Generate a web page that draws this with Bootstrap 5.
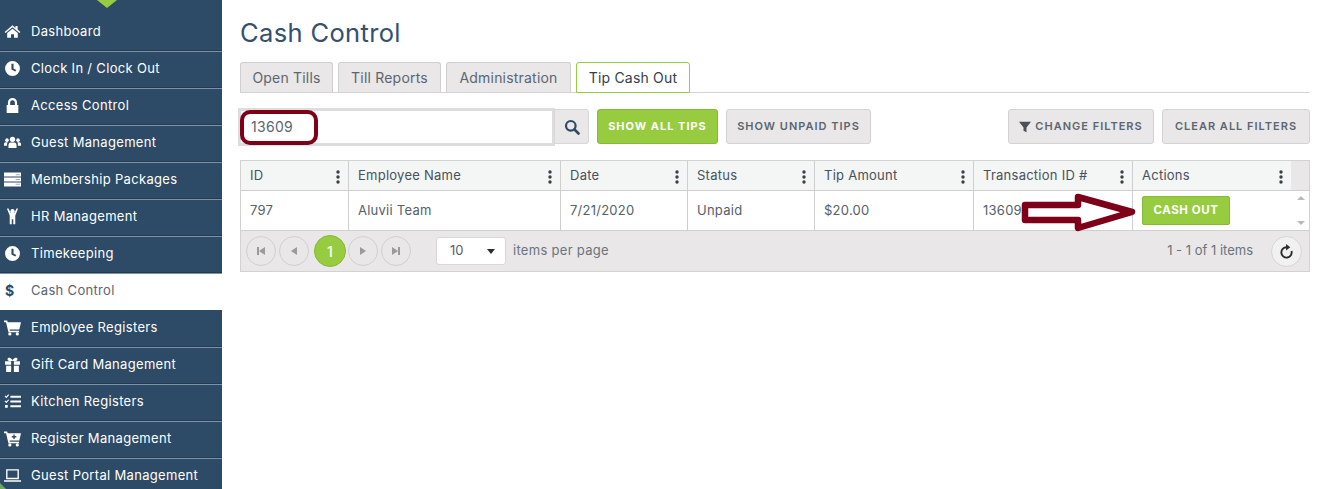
<!DOCTYPE html>
<html lang="en">
<head>
<meta charset="utf-8">
<title>Cash Control</title>
<link rel="stylesheet" href="https://cdn.jsdelivr.net/npm/bootstrap@5.3.0/dist/css/bootstrap.min.css">
<style>
html,body{height:100%;overflow:hidden;background:#fff}
body{font-family:"Inter","Liberation Sans",sans-serif;font-size:13px;color:#566068}
.app-shell{height:489px;overflow:hidden}
.side-rail{width:222px;flex:none;background:#2d4a66;padding-top:15px;position:relative;height:489px;overflow:hidden}
.rail-tip{position:absolute;left:97px;top:0;width:0;height:0;border-left:10px solid transparent;border-right:10px solid transparent;border-top:8px solid #97cc40}
.rail-corner{position:absolute;left:0;bottom:0;width:0;height:0;border-right:6px solid transparent;border-bottom:6px solid #6fa85a}
.rail-link{display:flex;align-items:center;height:37px;padding-bottom:3px;color:#fff;text-decoration:none;border-bottom:1px solid #7e92a5;box-shadow:inset 0 -1px 0 #233c54;font-size:13px;letter-spacing:.32px}
.rail-link:hover{color:#fff}
.rail-link.is-current{background:#fff;color:#5a6670;border-bottom-color:#2d4a66;box-shadow:none}
.rail-ico{width:31px;flex:none;display:flex;justify-content:flex-start;padding-left:4px}
.rail-ico svg{width:17px;height:17px;fill:currentColor}
.rail-dollar{font-weight:700;font-size:14px;color:#2d4a66;padding-left:1px}
.main-pane{width:1070px;margin-left:18px;flex:none}
.page-head{font-size:25.5px;font-weight:400;color:#34506d;margin:0;padding-top:17px;line-height:31px;height:62px;letter-spacing:.35px}
.tab-strip{display:flex;gap:5px;border-bottom:1px solid #d4d4d4;height:31px;list-style:none;padding:0;margin:0}
.tab-btn{display:flex;align-items:center;justify-content:center;height:30px;background:#e9e7e8;border:1px solid #cfcfcf;border-bottom:0;border-radius:3px 3px 0 0;color:#5b6670;font-size:14px;letter-spacing:.2px;text-decoration:none}
.tab-btn.is-on{background:#fff;border:1px solid #97cc40;color:#34404a;height:31px}
.w-t1{width:93px}.w-t2{width:103px}.w-t3{width:125px}.w-t4{width:114px}
.tool-row{display:flex;align-items:center;margin-top:16px;height:35px}
.find-box{width:313px;height:34px;border:1px solid #ddd;box-shadow:0 0 0 2px #ddd;padding:0 10px;font-size:14px;letter-spacing:.3px;color:#5b6670;background:#fff;outline:0;font-family:inherit}
.find-btn{width:35px;height:35px;margin-left:1px;background:#e9e7e8;border:1px solid #d8d8d8;border-radius:0 3px 3px 0;display:flex;align-items:center;justify-content:center;padding:0;color:#2d4a66}
.find-btn svg{width:16px;height:16px}
.act-btn{height:35px;border-radius:3px;font-size:11px;font-weight:600;letter-spacing:1px;padding:0;display:flex;align-items:center;justify-content:center;text-transform:uppercase}
.act-gray{background:#e9e7e8;border:1px solid #d2d2d2;color:#5b6670}
.act-green{background:#97cc40;border:1px solid #86b83a;color:#fff;font-weight:700}
.w-b1{width:121px;margin-left:8px}.w-b2{width:145px;margin-left:8px}.w-b3{width:146px;margin-left:auto}.w-b4{width:148px;margin-left:8px}
.act-gray svg{width:12px;height:12px;margin-right:4px;fill:#4a5159}
.data-wrap{margin-top:16px;border:1px solid #d2d2d2;width:1070px}
.grid-line{display:flex}
.head-line{background:#f4f5f5;height:30px;border-bottom:1px solid #cfcfcf}
.body-line{height:40px;background:#fff;border-bottom:1px solid #cfcfcf}
.cell-box{flex:none;display:flex;align-items:center;justify-content:space-between;padding:0 9px;border-right:1px solid #cfcfcf;font-size:13px;letter-spacing:.25px;color:#566068}
.head-line .cell-box{color:#47525c}
.c1{width:108px}.c2{width:212px}.c3{width:127px}.c4{width:127px}.c5{width:159px}.c6{width:159px}.c7{width:158px}
.body-line .c7{width:159px;border-right:0}
.kebab{width:4px;height:14px;fill:#3a3f44;margin-top:3px;margin-right:-1px}
.scroll-fill{flex:1;background:#e9e7e8}
.scroll-track{flex:1;display:flex;flex-direction:column;align-items:center;justify-content:space-between;padding:5px 0;background:#fff}
.arrow-up{width:0;height:0;border-left:4px solid transparent;border-right:4px solid transparent;border-bottom:4px solid #b9b9b9}
.arrow-dn{width:0;height:0;border-left:4px solid transparent;border-right:4px solid transparent;border-top:4px solid #b9b9b9}
.cash-btn{width:88px;height:29px;background:#97cc40;border:1px solid #86b83a;border-radius:2px;color:#fff;font-size:11.5px;font-weight:700;letter-spacing:.6px;padding:0}
.pager-line{height:40px;background:#e9e7e8;display:flex;align-items:center;padding:0 5px}
.pg-dot{width:30px;height:30px;border-radius:50%;border:1px solid #d0d0d0;background:#e9e7e8;display:flex;align-items:center;justify-content:center;margin-right:3px;padding:0}
.pg-dot svg{width:8px;height:8px;fill:#9a9a9a}
.pg-on{width:32px;height:32px;background:#97cc40;border-color:#86b83a;color:#fff;font-size:14px;font-weight:500;margin:0 2px}
.pg-size{width:70px;height:28px;margin-left:22px;background:#fff;border:1px solid #d8d8d8;border-radius:3px;display:flex;align-items:center;justify-content:space-between;padding:0 10px 0 13px;font-size:13px;color:#566068}
.pg-caret{width:0;height:0;border-left:4px solid transparent;border-right:4px solid transparent;border-top:5px solid #2c2c2c}
.pg-note{margin-left:7px;font-size:13px;letter-spacing:.3px;color:#6b747b}
.pg-count{margin-left:auto;font-size:13px;color:#6b747b;margin-right:18px}
.pg-refresh{width:31px;height:31px;border-radius:50%;border:1px solid #d6d6d6;background:#f1f1f1;display:flex;align-items:center;justify-content:center;padding:0;margin-right:2px}
.pg-refresh svg{width:15px;height:15px}
.note-ring{position:absolute;left:240px;top:110px;width:78px;height:35px;border:4px solid #7e0018;border-radius:10px;pointer-events:none}
.note-arrow{position:absolute;left:1020px;top:192px;width:122px;height:44px;pointer-events:none}
</style>
</head>
<body>
<svg width="0" height="0" class="position-absolute">
  <symbol id="i-home" viewBox="0 0 16 16"><path d="M8 2.200.6 8.400l.9 1.100L8 4.100l6.500 5.400.9-1.100-2.600-2.200V2.900h-2v1.700zM8 5.300l-5 4.200v4.300h3.600v-3.100h2.800v3.100H13V9.500z"/></symbol>
  <symbol id="i-clock" viewBox="0 0 16 16"><path fill-rule="evenodd" d="M8 1a7 7 0 1 1 0 14A7 7 0 0 1 8 1zM7 3.500v5.400l3.600 2 .9-1.500L9 8V3.500z"/></symbol>
  <symbol id="i-lock" viewBox="0 0 16 16"><path fill-rule="evenodd" d="M2.500 7.500h1.200V5.200a4.300 4.300 0 0 1 8.600 0v2.300h1.200v7.600h-11zM5.800 7.500h4.400V5.200a2.200 2.200 0 0 0-4.400 0z"/></symbol>
  <symbol id="i-users" viewBox="0 0 16 16"><circle cx="8" cy="5" r="2.500"/><circle cx="2.800" cy="5.800" r="1.700"/><circle cx="13.200" cy="5.800" r="1.700"/><path d="M4.200 13.200V10.500c0-1.600 1-2.500 2-2.500h3.600c1 0 2 .9 2 2.500v2.700zM0 11V9.500c0-1 .7-1.700 1.500-1.700h2c-.4.600-.6 1.200-.6 2V11zM16 11V9.500c0-1-.7-1.700-1.500-1.700h-2c.4.600.6 1.200.6 2V11z"/></symbol>
  <symbol id="i-server" viewBox="0 0 16 16"><path d="M0 1.500h16v3.700H0zM0 6.200h16v3.700H0zM0 10.900h16v3.700H0z"/><path fill="#9fb0c0" d="M11 12h4v1h-4zM11 7.500h4v1h-4zM11 3h4v1h-4z"/></symbol>
  <symbol id="i-person" viewBox="0 0 16 16"><circle cx="8" cy="3" r="2"/><path d="M2.800.8 4 .2l2.200 4.200h3.600L12 .2l1.200.6-2.600 6.200v8.200H8.700v-4.700H7.300v4.700H5.400V7z"/></symbol>
  <symbol id="i-cart" viewBox="0 0 16 16"><path d="M0 1.500h3l.5 1.600H16l-1.600 6.700H5.200l.3 1.200h8.700v1.500H4.200L1.900 3H0z"/><circle cx="5.500" cy="14" r="1.500"/><circle cx="12.500" cy="14" r="1.500"/></symbol>
  <symbol id="i-gift" viewBox="0 0 16 16"><path fill-rule="evenodd" d="M1 5h14v3.200H9.300V5H6.700v3.200H1zM2 9.200h4.700V15H2zM9.300 9.200H14V15H9.300zM8 4.500C6.500 4.800 3.500 5 3.300 3 3.200 1.500 5.500.5 8 3.700 10.500.5 12.800 1.500 12.700 3c-.2 2-3.200 1.800-4.700 1.500z"/></symbol>
  <symbol id="i-tasks" viewBox="0 0 16 16"><path d="M6 2.500h10v2H6zM6 7h10v2H6zM6 11.500h10v2H6z"/><path d="m.5 3 .8-.7.9.9L4 1.200l.8.7-2.600 3zM.5 7.800l.8-.7.9.9L4 6l.8.700-2.600 3zM1 11.300h2.500v2.500H1z"/></symbol>
  <symbol id="i-cartplus" viewBox="0 0 16 16"><path fill-rule="evenodd" d="M0 1.500h3l.5 1.600H16l-1.600 6.700H5.200l.3 1.200h8.700v1.500H4.200L1.900 3H0zM8.800 4.200v1.500H7.300v1.300h1.500v1.500h1.300V7h1.500V5.700h-1.500V4.200z"/><circle cx="5.500" cy="14" r="1.500"/><circle cx="12.500" cy="14" r="1.500"/></symbol>
  <symbol id="i-laptop" viewBox="0 0 16 16"><path fill-rule="evenodd" d="M2 2h12v9.500H2zM3.300 3.300v6.900h9.400V3.300zM0 12.500h16v1.300H0z"/></symbol>
</svg>
<div class="app-shell d-flex">
  <nav class="side-rail">
    <span class="rail-tip"></span>
    <a class="rail-link" href="#"><span class="rail-ico"><svg><use href="#i-home"/></svg></span>Dashboard</a>
    <a class="rail-link" href="#"><span class="rail-ico"><svg><use href="#i-clock"/></svg></span>Clock In / Clock Out</a>
    <a class="rail-link" href="#"><span class="rail-ico"><svg><use href="#i-lock"/></svg></span>Access Control</a>
    <a class="rail-link" href="#"><span class="rail-ico"><svg><use href="#i-users"/></svg></span>Guest Management</a>
    <a class="rail-link" href="#"><span class="rail-ico"><svg><use href="#i-server"/></svg></span>Membership Packages</a>
    <a class="rail-link" href="#"><span class="rail-ico"><svg><use href="#i-person"/></svg></span>HR Management</a>
    <a class="rail-link" href="#"><span class="rail-ico"><svg><use href="#i-clock"/></svg></span>Timekeeping</a>
    <a class="rail-link is-current" href="#"><span class="rail-ico"><span class="rail-dollar">$</span></span>Cash Control</a>
    <a class="rail-link" href="#"><span class="rail-ico"><svg><use href="#i-cart"/></svg></span>Employee Registers</a>
    <a class="rail-link" href="#"><span class="rail-ico"><svg><use href="#i-gift"/></svg></span>Gift Card Management</a>
    <a class="rail-link" href="#"><span class="rail-ico"><svg><use href="#i-tasks"/></svg></span>Kitchen Registers</a>
    <a class="rail-link" href="#"><span class="rail-ico"><svg><use href="#i-cartplus"/></svg></span>Register Management</a>
    <a class="rail-link" href="#"><span class="rail-ico"><svg><use href="#i-laptop"/></svg></span>Guest Portal Management</a>
    <span class="rail-corner"></span>
  </nav>
  <main class="main-pane">
    <h1 class="page-head">Cash Control</h1>
    <div class="tab-strip">
      <a class="tab-btn w-t1" href="#">Open Tills</a>
      <a class="tab-btn w-t2" href="#">Till Reports</a>
      <a class="tab-btn w-t3" href="#">Administration</a>
      <a class="tab-btn w-t4 is-on" href="#">Tip Cash Out</a>
    </div>
    <div class="tool-row">
      <input class="find-box" type="text" value="13609" aria-label="Search">
      <button class="find-btn btn" type="button" aria-label="Search"><svg viewBox="0 0 16 16"><circle cx="6.800" cy="6.800" r="4.800" fill="none" stroke="currentColor" stroke-width="2.200"/><path d="m10.500 10.500 4 4" stroke="currentColor" stroke-width="2.600" stroke-linecap="round"/></svg></button>
      <button class="act-btn act-green btn w-b1" type="button">Show All Tips</button>
      <button class="act-btn act-gray btn w-b2" type="button">Show Unpaid Tips</button>
      <button class="act-btn act-gray btn w-b3" type="button"><svg viewBox="0 0 16 16"><path d="M0 1h16L10 8.500V15l-4-2V8.500z"/></svg>Change Filters</button>
      <button class="act-btn act-gray btn w-b4" type="button">Clear All Filters</button>
    </div>
    <div class="data-wrap">
      <div class="grid-line head-line">
        <div class="cell-box c1">ID<svg class="kebab" viewBox="0 0 4 14"><circle cx="2" cy="2" r="1.700"/><circle cx="2" cy="7" r="1.700"/><circle cx="2" cy="12" r="1.700"/></svg></div>
        <div class="cell-box c2">Employee Name<svg class="kebab" viewBox="0 0 4 14"><circle cx="2" cy="2" r="1.700"/><circle cx="2" cy="7" r="1.700"/><circle cx="2" cy="12" r="1.700"/></svg></div>
        <div class="cell-box c3">Date<svg class="kebab" viewBox="0 0 4 14"><circle cx="2" cy="2" r="1.700"/><circle cx="2" cy="7" r="1.700"/><circle cx="2" cy="12" r="1.700"/></svg></div>
        <div class="cell-box c4">Status<svg class="kebab" viewBox="0 0 4 14"><circle cx="2" cy="2" r="1.700"/><circle cx="2" cy="7" r="1.700"/><circle cx="2" cy="12" r="1.700"/></svg></div>
        <div class="cell-box c5">Tip Amount<svg class="kebab" viewBox="0 0 4 14"><circle cx="2" cy="2" r="1.700"/><circle cx="2" cy="7" r="1.700"/><circle cx="2" cy="12" r="1.700"/></svg></div>
        <div class="cell-box c6">Transaction ID #<svg class="kebab" viewBox="0 0 4 14"><circle cx="2" cy="2" r="1.700"/><circle cx="2" cy="7" r="1.700"/><circle cx="2" cy="12" r="1.700"/></svg></div>
        <div class="cell-box c7 border-0">Actions<svg class="kebab" viewBox="0 0 4 14"><circle cx="2" cy="2" r="1.700"/><circle cx="2" cy="7" r="1.700"/><circle cx="2" cy="12" r="1.700"/></svg></div>
        <div class="scroll-fill"></div>
      </div>
      <div class="grid-line body-line">
        <div class="cell-box c1">797</div>
        <div class="cell-box c2">Aluvii Team</div>
        <div class="cell-box c3">7/21/2020</div>
        <div class="cell-box c4">Unpaid</div>
        <div class="cell-box c5">$20.00</div>
        <div class="cell-box c6">13609</div>
        <div class="cell-box c7"><button class="cash-btn btn" type="button">CASH OUT</button></div>
        <div class="scroll-track"><span class="arrow-up"></span><span class="arrow-dn"></span></div>
      </div>
      <div class="pager-line">
        <button class="pg-dot btn" type="button" aria-label="First"><svg viewBox="0 0 8 8"><path d="M0 0h2v8H0zM8 0v8L2 4z"/></svg></button>
        <button class="pg-dot btn" type="button" aria-label="Previous"><svg viewBox="0 0 8 8"><path d="M7 0v8L1 4z"/></svg></button>
        <button class="pg-dot pg-on btn" type="button">1</button>
        <button class="pg-dot btn" type="button" aria-label="Next"><svg viewBox="0 0 8 8"><path d="M1 0v8l6-4z"/></svg></button>
        <button class="pg-dot btn" type="button" aria-label="Last"><svg viewBox="0 0 8 8"><path d="M8 0H6v8h2zM0 0v8l6-4z"/></svg></button>
        <div class="pg-size">10<span class="pg-caret"></span></div>
        <span class="pg-note">items per page</span>
        <span class="pg-count">1 - 1 of 1 items</span>
        <button class="pg-refresh btn" type="button" aria-label="Refresh"><svg viewBox="0 0 16 16"><path d="M13.300 7.500A5.500 5.500 0 1 1 8 3.500" fill="none" stroke="#2b2b2b" stroke-width="2"/><path d="M7.500 0l4.500 3.500L7.500 7z" fill="#2b2b2b"/></svg></button>
      </div>
    </div>
  </main>
</div>
<div class="note-ring"></div>
<svg class="note-arrow" viewBox="0 0 122 44"><path d="M5 13H58V5L112 20 58 36V28H5z" fill="none" stroke="#7e0018" stroke-width="6.500" stroke-linejoin="round"/></svg>
<script src="https://cdn.jsdelivr.net/npm/bootstrap@5.3.0/dist/js/bootstrap.bundle.min.js"></script>
</body>
</html>
